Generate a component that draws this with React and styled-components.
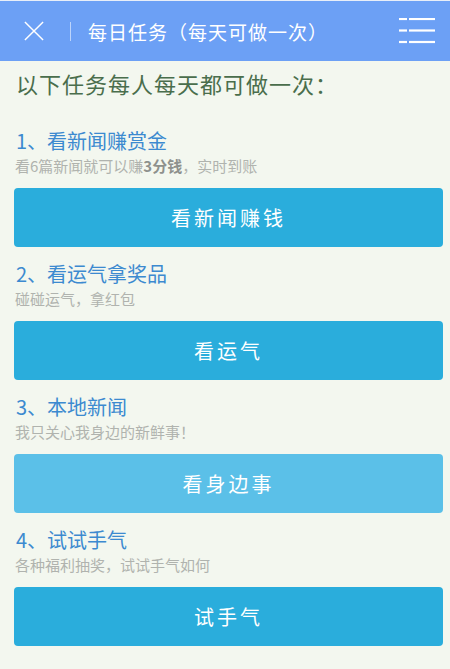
import React from 'react';
import styled, { createGlobalStyle } from 'styled-components';

const GlobalStyle = createGlobalStyle`
	html, body {
		margin: 0;
		padding: 0;
		background: #f3f7ef;
	}
	body {
		font-family: "Noto Sans CJK SC", "Noto Sans", sans-serif;
	}
`

const tasks = [
	{ title: '1、看新闻赚赏金', desc: <>看6篇新闻就可以赚<b>3分钱</b>，实时到账</>, action: '看新闻赚钱' },
	{ title: '2、看运气拿奖品', desc: '碰碰运气，拿红包', action: '看运气' },
	{ title: '3、本地新闻', desc: '我只关心我身边的新鲜事！', action: '看身边事', light: true },
	{ title: '4、试试手气', desc: '各种福利抽奖，试试手气如何', action: '试手气' },
]

const App = () => (
	<Page>
		<GlobalStyle />
		<Header>
			<CloseIcon viewBox="0 0 22 22">
				<path d="M1 1 L21 21 M21 1 L1 21" stroke="#fff" strokeWidth="1.6" fill="none" />
			</CloseIcon>
			<Divider />
			<Title>每日任务（每天可做一次）</Title>
			<MenuIcon viewBox="0 0 36 26">
				{[1, 12.5, 24].map(y => (
					<g key={y} stroke="#fff" strokeWidth="2.2">
						<line x1="0" y1={y} x2="8" y2={y} />
						<line x1="10" y1={y} x2="36" y2={y} />
					</g>
				))}
			</MenuIcon>
		</Header>
		<Content>
			<Intro>以下任务每人每天都可做一次：</Intro>
			{tasks.map(t => (
				<Task key={t.title}>
					<TaskTitle>{t.title}</TaskTitle>
					<TaskDesc>{t.desc}</TaskDesc>
					<ActionButton light={t.light}>{t.action}</ActionButton>
				</Task>
			))}
		</Content>
	</Page>
)

const Page = styled.div`
	min-height: 669px;
	background: #f3f7ef;
`

const Header = styled.div`
	height: 61px;
	border-top: 1px solid #e8eef8;
	background: #6ca0f5;
	display: flex;
	align-items: center;
	padding: 0 15px 0 24px;
	box-sizing: border-box;
`

const CloseIcon = styled.svg`
	width: 20px;
	height: 20px;
	flex-shrink: 0;
`

const Divider = styled.div`
	width: 1px;
	height: 19px;
	background: rgba(255,255,255,0.55);
	margin: 0 17px 0 26px;
`

const Title = styled.div`
	flex: 1;
	color: #fff;
	font-size: 19px;
	letter-spacing: 1px;
	line-height: 1;
`

const MenuIcon = styled.svg`
	width: 36px;
	height: 26px;
	flex-shrink: 0;
`

const Content = styled.div`
	padding: 7px 7px 0 14px;
`

const Intro = styled.div`
	color: #4a6e4c;
	font-size: 22px;
	letter-spacing: 1px;
	line-height: 30px;
	padding-left: 2px;
	margin-bottom: 30px;
`

const Task = styled.div`
	margin-bottom: 14px;
`

const TaskTitle = styled.div`
	color: #3c8ad0;
	font-size: 20px;
	line-height: 26px;
	padding-left: 2px;
`

const TaskDesc = styled.div`
	color: #b0b3ae;
	font-size: 15px;
	line-height: 24px;
	padding-left: 1px;
	margin-bottom: 10px;
	b {
		color: #8e918d;
	}
`

const ActionButton = styled.div`
	height: 59px;
	border-radius: 4px;
	background: ${props => props.light ? '#5bc0e8' : '#2aaddc'};
	color: #fff;
	font-size: 20px;
	letter-spacing: 3px;
	display: flex;
	align-items: center;
	justify-content: center;
`

export default App;
